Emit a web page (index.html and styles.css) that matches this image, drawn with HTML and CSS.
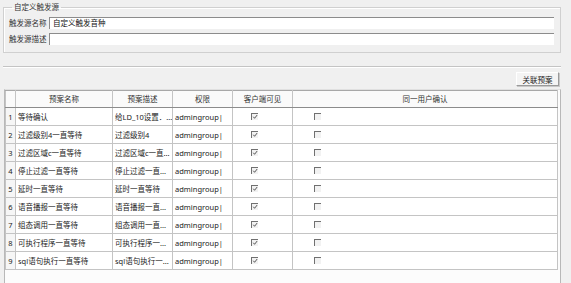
FILE: index.html
```html
<html>
<head>
	<title>自定义触发源</title>
<link rel="stylesheet" href="styles.css">
</head>
<body>

	<div id="page">

		<fieldset class="group">
			<legend>自定义触发源</legend>
			<div class="field">
				<label>触发源名称</label>
				<div class="input">自定义触发音种</div>
			</div>
			<div class="field">
				<label>触发源描述</label>
				<div class="input"></div>
			</div>
		</fieldset>

		<div class="sep"></div>

		<div class="toolbar">
			<button>关联预案</button>
		</div>

		<div class="grid">
			<table>
				<colgroup>
					<col class="c-no"><col class="c-name"><col class="c-desc"><col class="c-perm"><col class="c-vis"><col class="c-same">
				</colgroup>
				<thead>
					<tr><th></th><th>预案名称</th><th>预案描述</th><th>权限</th><th>客户端可见</th><th>同一用户确认</th></tr>
				</thead>
				<tbody>
					<tr><td class="no">1</td><td>等待确认</td><td>给LD_10设置．...</td><td>admingroup|</td><td class="cb"><span class="chk on"><svg viewBox="0 0 7 7"><path d="M1.5 3.2 L3 5 L6 1.2"/></svg></span></td><td class="cb2"><span class="chk"></span></td></tr>
					<tr><td class="no">2</td><td>过滤级别4一直等待</td><td>过滤级别4</td><td>admingroup|</td><td class="cb"><span class="chk on"><svg viewBox="0 0 7 7"><path d="M1.5 3.2 L3 5 L6 1.2"/></svg></span></td><td class="cb2"><span class="chk"></span></td></tr>
					<tr><td class="no">3</td><td>过滤区域c一直等待</td><td>过滤区域c一直...</td><td>admingroup|</td><td class="cb"><span class="chk on"><svg viewBox="0 0 7 7"><path d="M1.5 3.2 L3 5 L6 1.2"/></svg></span></td><td class="cb2"><span class="chk"></span></td></tr>
					<tr><td class="no">4</td><td>停止过滤一直等待</td><td>停止过滤一直...</td><td>admingroup|</td><td class="cb"><span class="chk on"><svg viewBox="0 0 7 7"><path d="M1.5 3.2 L3 5 L6 1.2"/></svg></span></td><td class="cb2"><span class="chk"></span></td></tr>
					<tr><td class="no">5</td><td>延时一直等待</td><td>延时一直等待</td><td>admingroup|</td><td class="cb"><span class="chk on"><svg viewBox="0 0 7 7"><path d="M1.5 3.2 L3 5 L6 1.2"/></svg></span></td><td class="cb2"><span class="chk"></span></td></tr>
					<tr><td class="no">6</td><td>语音播报一直等待</td><td>语音播报一直...</td><td>admingroup|</td><td class="cb"><span class="chk on"><svg viewBox="0 0 7 7"><path d="M1.5 3.2 L3 5 L6 1.2"/></svg></span></td><td class="cb2"><span class="chk"></span></td></tr>
					<tr><td class="no">7</td><td>组态调用一直等待</td><td>组态调用一直...</td><td>admingroup|</td><td class="cb"><span class="chk on"><svg viewBox="0 0 7 7"><path d="M1.5 3.2 L3 5 L6 1.2"/></svg></span></td><td class="cb2"><span class="chk"></span></td></tr>
					<tr><td class="no">8</td><td>可执行程序一直等待</td><td>可执行程序一...</td><td>admingroup|</td><td class="cb"><span class="chk on"><svg viewBox="0 0 7 7"><path d="M1.5 3.2 L3 5 L6 1.2"/></svg></span></td><td class="cb2"><span class="chk"></span></td></tr>
					<tr><td class="no">9</td><td>sql语句执行一直等待</td><td>sql语句执行一...</td><td>admingroup|</td><td class="cb"><span class="chk on"><svg viewBox="0 0 7 7"><path d="M1.5 3.2 L3 5 L6 1.2"/></svg></span></td><td class="cb2"><span class="chk"></span></td></tr>
				</tbody>
			</table>
		</div>

	</div>

</body>
</html>
```

FILE: styles.css
```css
html, body {
	margin: 0;
	padding: 0;
	background: #f0f0f0;
	overflow: hidden;
}

body {
	font-family: "Noto Sans", "Noto Sans CJK SC", sans-serif;
	font-size: 7.5px;
	color: #222;
}

#page {
	padding-top: 2px;
	width: 571px;
	height: 283px;
	overflow: hidden;
}

.group {
	margin: 0 0 0 3px;
	width: 558px;
	box-sizing: border-box;
	padding: 5px 6px 7px 5px;
	border: 1px solid #d0d0d0;
	box-shadow: inset 1px 1px 0 #fff;
}

.group legend {
	padding: 0 2px;
	margin-left: 3px;
	line-height: 10px;
	height: 10px;
	color: #333;
}

.field {
	display: flex;
	align-items: center;
	height: 12px;
}

.field + .field {
	margin-top: 4px;
}

.field label {
	width: 40px;
	line-height: 12px;
	color: #333;
}

.input {
	flex: 1;
	height: 11px;
	line-height: 11px;
	background: #fff;
	border-top: 1px solid #8c8c8c;
	border-left: 1px solid #8c8c8c;
	padding-left: 3px;
	color: #111;
}

.sep {
	margin: 13px 10px 0 3px;
	border-top: 1px solid #c4c4c4;
	border-bottom: 1px solid #fff;
}

.toolbar {
	display: flex;
	justify-content: flex-end;
	padding-right: 12px;
	margin-top: 4px;
}

.toolbar button {
	width: 43px;
	height: 14px;
	padding: 0;
	font-family: inherit;
	font-size: 7.5px;
	color: #222;
	background: #f4f4f4;
	border: 1px solid #fff;
	border-right-color: #9a9a9a;
	border-bottom-color: #9a9a9a;
	box-shadow: 1px 1px 0 #c8c8c8;
}

.grid {
	margin: 3px 0 0 4px;
	width: 557px;
	height: 200px;
	box-sizing: border-box;
	background: #fcfcfc;
	border-left: 1px solid #b8b8b8;
	border-right: 1px solid #b8b8b8;
	border-top: 1px solid #e0e0e0;
}

table {
	border-collapse: collapse;
	table-layout: fixed;
	width: 552px;
	background: #fff;
	font-size: inherit;
	font-family: inherit;
}

col.c-no { width: 10px; }
col.c-name { width: 97px; }
col.c-desc { width: 60px; }
col.c-perm { width: 60px; }
col.c-vis { width: 60px; }
col.c-same { width: 265px; }

th, td {
	border: 1px solid #c4c4c4;
	white-space: nowrap;
	overflow: hidden;
	padding: 0 0 0 2px;
	font-weight: normal;
	font-size: 7.5px;
	line-height: 10px;
}

th {
	height: 17px;
	text-align: center;
	padding: 0;
	color: #333;
	background: #fafafa;
	border-color: #a8a8a8 #c4c4c4 #8c8c8c #c4c4c4;
}

td {
	height: 18px;
	color: #222;
}

td.no {
	padding: 0;
	text-align: center;
	background: #f6f6f6;
}

td.cb {
	padding-left: 18px;
}

td.cb2 {
	padding-left: 21px;
}

.chk {
	display: block;
	width: 6px;
	height: 6px;
	border-top: 1px solid #707070;
	border-left: 1px solid #707070;
	background: #f2f2f2;
}

.chk svg {
	display: block;
	width: 6px;
	height: 6px;
}

.chk svg path {
	fill: none;
	stroke: #404040;
	stroke-width: 1;
}
```
